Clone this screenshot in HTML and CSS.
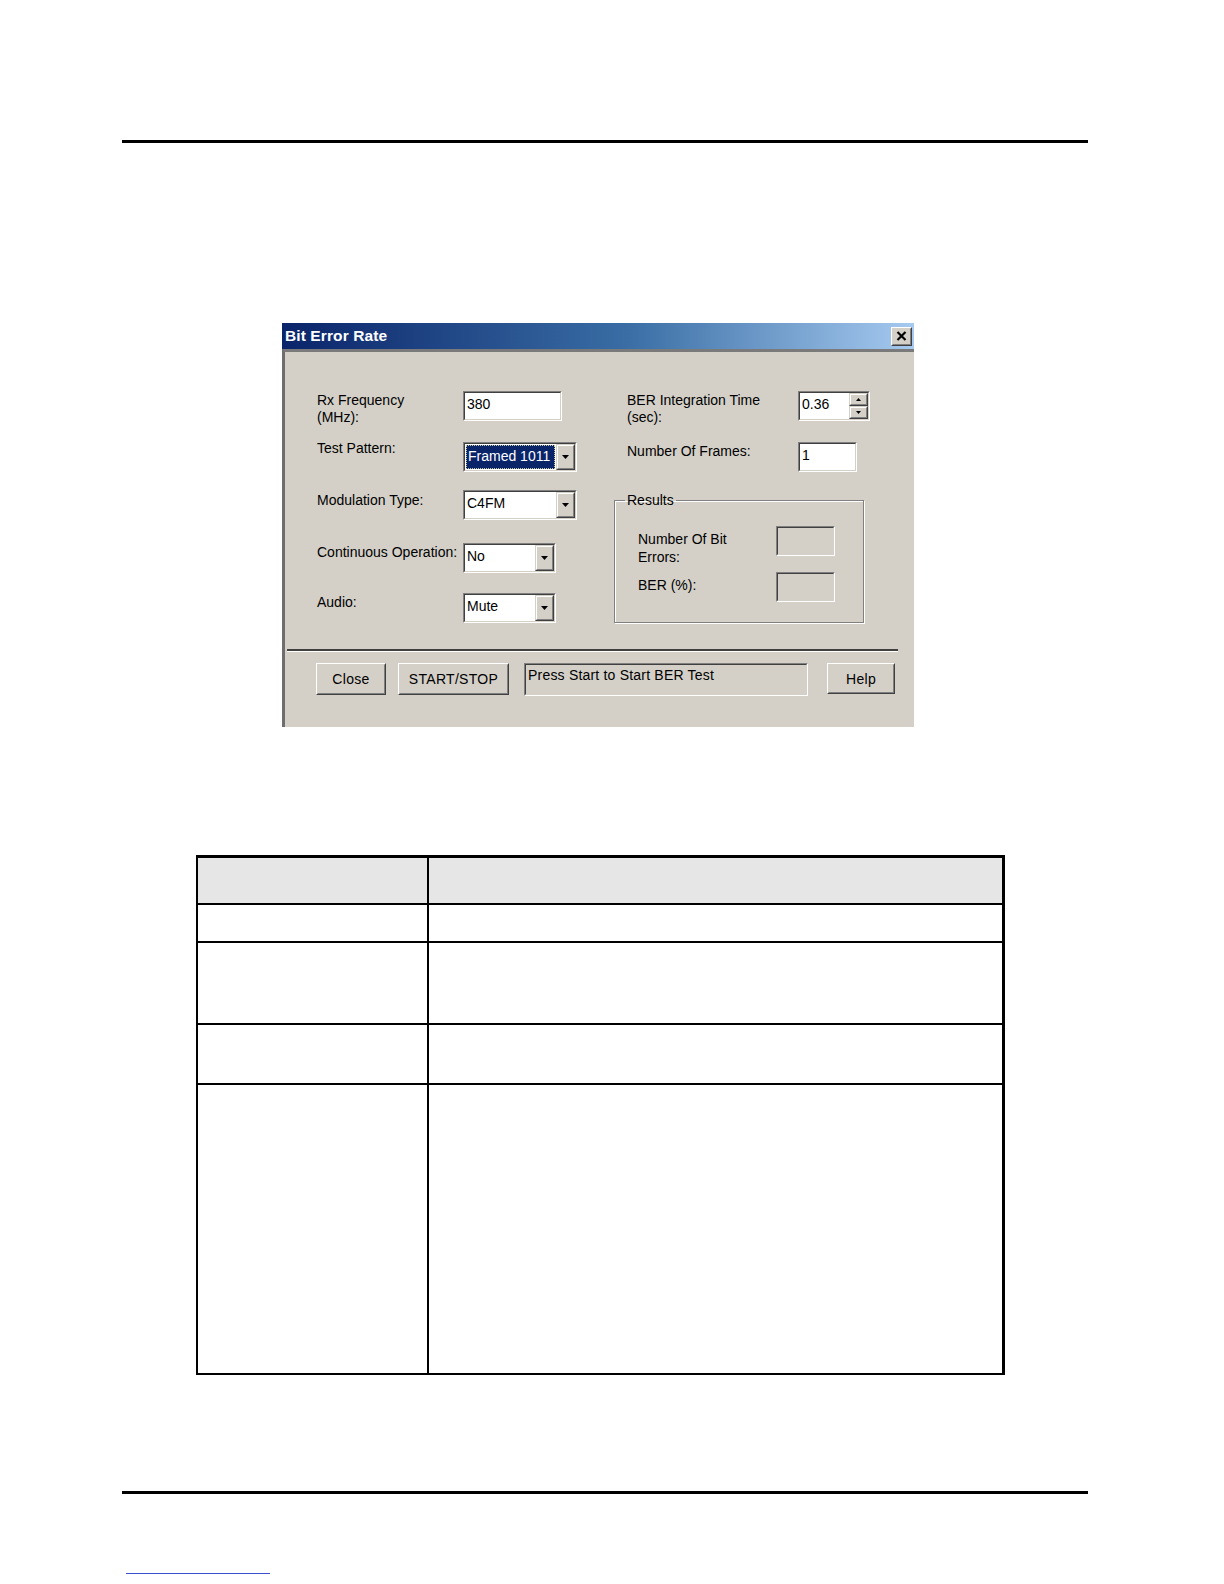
FILE: index.html
```html
<!DOCTYPE html>
<html>
<head>
<meta charset="utf-8">
<link rel="stylesheet" href="styles.css">
</head>
<body>
<div class="page">
  <div class="rule rule-top"></div>

  <div class="dialog">
    <div class="titlebar">
      <span class="title">Bit Error Rate</span>
      <span class="xbtn"><span class="xbtn-in">
        <svg width="11" height="10" viewBox="0 0 11 10"><path d="M1.5 1 L9.5 9 M9.5 1 L1.5 9" stroke="#000" stroke-width="2.2" fill="none"/></svg>
      </span></span>
    </div>
    <div class="dbody">
      <div class="form">
        <div class="col col-left">
          <div class="row h51">
            <div class="lbl">Rx Frequency<br>(MHz):</div>
            <div class="fld w99"><div class="fld-in"><span class="val">380</span></div></div>
          </div>
          <div class="row h48">
            <div class="lbl lbl-up">Test Pattern:</div>
            <div class="fld w114"><div class="fld-in">
              <span class="val val-sel"><span class="selbox">Framed 1011</span></span>
              <span class="dd"><span class="dd-in"><svg width="7" height="4" viewBox="0 0 7 4"><polygon points="0,0 7,0 3.5,4" fill="#000"/></svg></span></span>
            </div></div>
          </div>
          <div class="row h53">
            <div class="lbl lbl-down">Modulation Type:</div>
            <div class="fld w114"><div class="fld-in">
              <span class="val">C4FM</span>
              <span class="dd"><span class="dd-in"><svg width="7" height="4" viewBox="0 0 7 4"><polygon points="0,0 7,0 3.5,4" fill="#000"/></svg></span></span>
            </div></div>
          </div>
          <div class="row h50">
            <div class="lbl">Continuous Operation:</div>
            <div class="fld w93"><div class="fld-in">
              <span class="val">No</span>
              <span class="dd"><span class="dd-in"><svg width="7" height="4" viewBox="0 0 7 4"><polygon points="0,0 7,0 3.5,4" fill="#000"/></svg></span></span>
            </div></div>
          </div>
          <div class="row h30">
            <div class="lbl">Audio:</div>
            <div class="fld w93"><div class="fld-in">
              <span class="val">Mute</span>
              <span class="dd"><span class="dd-in"><svg width="7" height="4" viewBox="0 0 7 4"><polygon points="0,0 7,0 3.5,4" fill="#000"/></svg></span></span>
            </div></div>
          </div>
        </div>

        <div class="col col-right">
          <div class="row h51">
            <div class="lbl">BER Integration Time<br>(sec):</div>
            <div class="fld w72"><div class="fld-in">
              <span class="val">0.36</span>
              <span class="spin">
                <span class="sb"><span class="sb-in"><svg width="5" height="3" viewBox="0 0 5 3"><polygon points="0,3 5,3 2.5,0" fill="#000"/></svg></span></span>
                <span class="sb"><span class="sb-in"><svg width="5" height="3" viewBox="0 0 5 3"><polygon points="0,0 5,0 2.5,3" fill="#000"/></svg></span></span>
              </span>
            </div></div>
          </div>
          <div class="row h50">
            <div class="lbl">Number Of Frames:</div>
            <div class="fld w59"><div class="fld-in"><span class="val">1</span></div></div>
          </div>
          <fieldset class="group">
            <legend class="legend">Results</legend>
            <div class="grow g1">
              <div class="glbl">Number Of Bit<br>Errors:</div>
              <div class="fld w59"><div class="fld-in gray"></div></div>
            </div>
            <div class="grow">
              <div class="glbl">BER (%):</div>
              <div class="fld w59"><div class="fld-in gray"></div></div>
            </div>
          </fieldset>
        </div>
      </div>

      <div class="sep"></div>

      <div class="btnrow">
        <span class="btn b-close"><span class="btn-in">Close</span></span>
        <span class="btn b-start"><span class="btn-in">START/STOP</span></span>
        <span class="status"><span class="status-in">Press Start to Start BER Test</span></span>
        <span class="btn b-help"><span class="btn-in">Help</span></span>
      </div>
    </div>
  </div>

  <div class="tbl">
    <div class="tr th h45"><div class="td"></div><div class="td"></div></div>
    <div class="tr h36"><div class="td"></div><div class="td"></div></div>
    <div class="tr h80"><div class="td"></div><div class="td"></div></div>
    <div class="tr h58"><div class="td"></div><div class="td"></div></div>
    <div class="tr h288"><div class="td"></div><div class="td"></div></div>
  </div>

  <div class="rule rule-bottom"></div>
  <div class="blue"></div>
</div>
</body>
</html>
```

FILE: styles.css
```css
html, body {
  margin: 0;
  padding: 0;
  background: #fff;
}

body {
  font-family: "Liberation Sans", Arial, sans-serif;
  color: #000;
}

.page {
  width: 1224px;
  height: 1584px;
  box-sizing: border-box;
  padding-top: 140px;
  overflow: hidden;
}

.rule {
  height: 3px;
  background: #000;
  margin-left: 122px;
  width: 966px;
}

/* ---------- dialog ---------- */
.dialog {
  margin-top: 180px;
  margin-left: 282px;
  width: 632px;
  height: 404px;
  background: #d4d0c8;
}

.titlebar {
  height: 26px;
  box-sizing: border-box;
  background: linear-gradient(to right, #0a246a 0%, #3a6ea5 55%, #a6caf0 100%);
  display: flex;
  align-items: center;
  justify-content: space-between;
  padding: 0 2px 0 3px;
}

.title {
  color: #fff;
  font-weight: bold;
  font-size: 15.5px;
  letter-spacing: 0.1px;
}

.xbtn {
  width: 21px;
  height: 19px;
  box-sizing: border-box;
  border: 1px solid;
  border-color: #fff #404040 #404040 #fff;
  background: #d4d0c8;
  display: flex;
}

.xbtn-in {
  flex: 1;
  border: 1px solid;
  border-color: #d4d0c8 #808080 #808080 #d4d0c8;
  display: flex;
  align-items: center;
  justify-content: center;
}

.dbody {
  height: 378px;
  box-sizing: border-box;
  border-top: 3px solid #7a7a7a;
  border-left: 3px solid #6e6e6e;
  padding-top: 39px;
}

.form {
  display: flex;
  padding-left: 32px;
}

.col-left {
  width: 310px;
}

.col-right {
  width: 260px;
}

.row {
  display: flex;
  align-items: flex-start;
}

.h51 { height: 51px; }
.h48 { height: 48px; }
.h53 { height: 53px; }
.h50 { height: 50px; }
.h30 { height: 30px; }

.lbl {
  font-size: 14px;
  line-height: 17px;
  padding-top: 1px;
  white-space: nowrap;
}

.lbl-up { padding-top: 0; margin-top: -2px; }
.lbl-down { padding-top: 2px; }

.col-left .lbl { width: 146px; }
.col-right .lbl { width: 171px; }

/* sunken field */
.fld {
  height: 30px;
  box-sizing: border-box;
  border: 1px solid;
  border-color: #808080 #fff #fff #808080;
  display: flex;
  flex-shrink: 0;
}

.fld-in {
  flex: 1;
  border: 1px solid;
  border-color: #404040 #d4d0c8 #d4d0c8 #404040;
  background: #fff;
  display: flex;
  align-items: stretch;
  min-width: 0;
}

.fld-in.gray { background: #d4d0c8; }

.w99 { width: 99px; }
.w114 { width: 114px; }
.w93 { width: 93px; }
.w72 { width: 72px; }
.w59 { width: 59px; }

.val {
  flex: 1;
  font-size: 14px;
  line-height: 17px;
  padding: 3px 0 0 2px;
  white-space: nowrap;
  overflow: hidden;
}

.val-sel {
  padding: 0 1px 1px 1px;
  display: flex;
}

.selbox {
  flex: 1;
  background: #0a246a;
  color: #fff;
  outline: 1px dotted #c8c8a0;
  outline-offset: -1px;
  padding: 3px 0 0 2px;
  margin-top: 1px;
}

/* dropdown button */
.dd {
  width: 19px;
  box-sizing: border-box;
  border: 1px solid;
  border-color: #d4d0c8 #404040 #404040 #d4d0c8;
  background: #d4d0c8;
  display: flex;
}

.dd-in {
  flex: 1;
  border: 1px solid;
  border-color: #fff #808080 #808080 #fff;
  display: flex;
  align-items: center;
  justify-content: center;
}

/* spinner */
.spin {
  width: 19px;
  display: flex;
  flex-direction: column;
}

.sb {
  flex: 1;
  box-sizing: border-box;
  border: 1px solid;
  border-color: #d4d0c8 #404040 #404040 #d4d0c8;
  background: #d4d0c8;
  display: flex;
}

.sb-in {
  flex: 1;
  border: 1px solid;
  border-color: #fff #808080 #808080 #fff;
  display: flex;
  align-items: center;
  justify-content: center;
}

/* results group */
.group {
  margin: 0 0 0 -13px;
  width: 250px;
  height: 131px;
  box-sizing: border-box;
  border: 1px solid;
  border-color: #808080 #fff #fff #808080;
  box-shadow: inset 1px 1px 0 #fff, 1px 1px 0 #808080 inset;
  outline: none;
  padding: 0 0 0 23px;
}

.group {
  border: none;
  box-shadow: none;
  position: relative;
}

.group {
  border: 1px solid #808080;
  box-shadow: 1px 1px 0 #fff, inset 1px 1px 0 #fff;
}

.legend {
  font-size: 14px;
  line-height: 17px;
  padding: 0 2px;
  margin-left: -13px;
}

.grow {
  display: flex;
  align-items: flex-start;
  height: 46px;
}

.g1 { margin-top: 17px; }

.glbl {
  width: 138px;
  font-size: 14px;
  line-height: 18px;
  padding-top: 4px;
}

/* separator */
.sep {
  margin: 26px 0 0 2px;
  width: 611px;
  height: 2px;
  background: #404040;
  border-bottom: 1px solid #fff;
}

/* buttons */
.btnrow {
  display: flex;
  align-items: flex-start;
  margin-top: 11px;
  padding-left: 31px;
}

.btn {
  height: 32px;
  box-sizing: border-box;
  border: 1px solid;
  border-color: #fff #404040 #404040 #fff;
  display: flex;
}

.btn-in {
  flex: 1;
  border: 1px solid;
  border-color: #d4d0c8 #808080 #808080 #d4d0c8;
  display: flex;
  align-items: center;
  justify-content: center;
  font-size: 14px;
  letter-spacing: 0.3px;
}

.b-close { width: 70px; margin-right: 12px; }
.b-start { width: 111px; margin-right: 15px; }
.b-help { width: 68px; height: 31px; }

.status {
  width: 284px;
  height: 33px;
  margin-right: 19px;
  box-sizing: border-box;
  border: 1px solid;
  border-color: #808080 #fff #fff #808080;
  display: flex;
}

.status-in {
  flex: 1;
  border: 1px solid;
  border-color: #404040 #d4d0c8 #d4d0c8 #404040;
  font-size: 14px;
  line-height: 17px;
  padding: 2px 0 0 2px;
  letter-spacing: 0.2px;
  white-space: nowrap;
}

/* ---------- table ---------- */
.tbl {
  margin-top: 128px;
  margin-left: 196px;
  width: 809px;
  box-sizing: border-box;
  border-top: 3px solid #000;
  border-left: 2px solid #000;
  border-right: 3px solid #000;
  border-bottom: 2px solid #000;
}

.tr {
  display: grid;
  grid-template-columns: 231px 1fr;
  border-bottom: 2px solid #000;
}

.tr:last-child { border-bottom: none; }

.td:first-child {
  border-right: 2px solid #000;
}

.th { background: #e6e6e6; }

.h45 { height: 45px; }
.h36 { height: 36px; }
.h80 { height: 80px; }
.h58 { height: 58px; }
.h288 { height: 288px; }

.rule-bottom {
  margin-top: 116px;
}

.blue {
  margin-top: 79px;
  margin-left: 126px;
  width: 144px;
  height: 1px;
  background: #3b4fd0;
}
```
